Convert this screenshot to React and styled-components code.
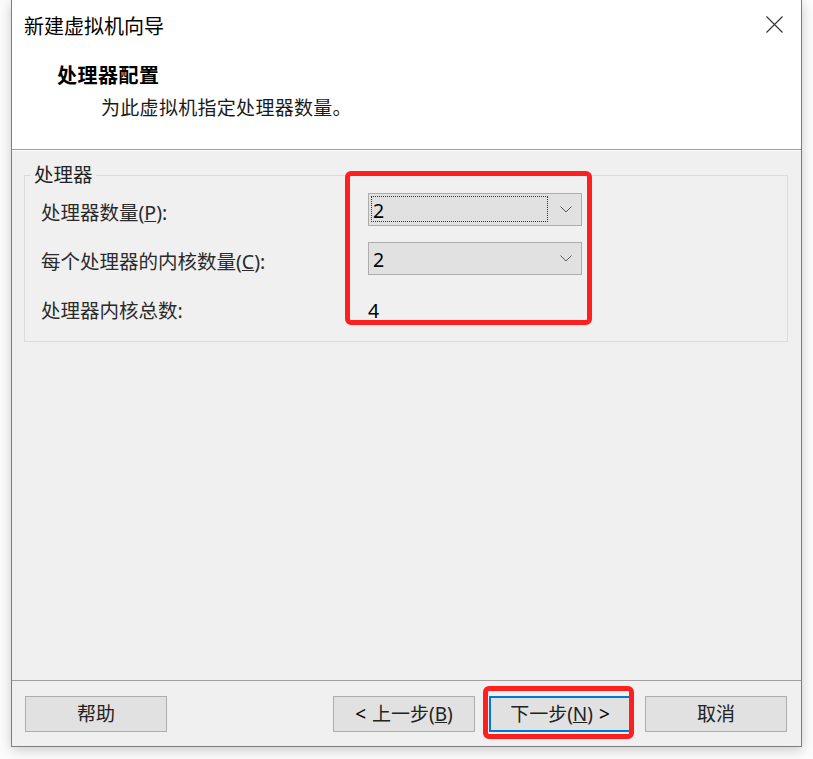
import React from "react";
import styled, { createGlobalStyle } from "styled-components";

const Global = createGlobalStyle`
  html, body { margin: 0; padding: 0; background: #ffffff; }
  body {
    font-family: "Noto Sans", "Noto Sans CJK SC", sans-serif;
    overflow: hidden;
  }
  * { box-sizing: border-box; }
`;

const Page = styled.div`
  width: 813px;
  height: 759px;
  padding-left: 11px;
  background: #fcfcfc;
`;

const Window = styled.div`
  width: 791px;
  height: 747px;
  display: flex;
  flex-direction: column;
  background: #f0f0f0;
  border: 1px solid #7d7d7d;
  border-top: none;
  box-shadow: 0 3px 12px rgba(0, 0, 0, 0.2);
`;

const Header = styled.header`
  height: 150px;
  background: #ffffff;
  border-bottom: 1px solid #a0a0a0;
`;

const TitleBar = styled.div`
  height: 50px;
  padding: 3px 18px 0 12px;
  display: flex;
  align-items: center;
  justify-content: space-between;
`;

const Title = styled.div`
  font-size: 20px;
  line-height: 24px;
  color: #000;
`;

const CloseIcon = styled.svg`
  width: 17px;
  height: 17px;
  margin-top: -4px;
`;

const Heading = styled.div`
  margin: 14px 0 0 45px;
  font-size: 20px;
  letter-spacing: 0.5px;
  line-height: 24px;
  font-weight: 700;
  color: #000;
`;

const Subtitle = styled.div`
  margin: 8px 0 0 89px;
  font-size: 19px;
  letter-spacing: 0.3px;
  line-height: 24px;
  color: #1a1a1a;
`;

const Body = styled.main`
  flex: 1;
  border-top: 1px solid #ffffff;
  padding: 12px 13px 0 12px;
`;

const Group = styled.fieldset`
  margin: 0;
  min-width: 0;
  border: 1px solid #dcdcdc;
  padding: 6px 16px 17px 16px;
  display: flex;
`;

const Legend = styled.legend`
  padding: 0 3px;
  margin-left: -10px;
  font-size: 19.5px;
  line-height: 24px;
  color: #222;
`;

const Column = styled.div`
  display: flex;
  flex-direction: column;
  gap: 16px;
  width: ${(p) => p.$width}px;
  position: ${(p) => (p.$annotated ? "relative" : "static")};
`;

const Label = styled.div`
  height: 33px;
  line-height: 33px;
  padding-top: 3px;
  font-size: 19.5px;
  color: #2a2a2a;
  white-space: nowrap;
`;

const Combo = styled.div`
  height: 33px;
  background: #e1e1e1;
  border: 1px solid #adadad;
  display: flex;
  align-items: center;
  padding: 2px 9px 3px 2px;
  gap: 12px;
`;

const ComboValue = styled.div`
  flex: 1;
  height: 100%;
  display: flex;
  align-items: center;
  padding: 2px 0 0 1px;
  font-size: 19.5px;
  color: #000;
  border: 1px dotted ${(p) => (p.$focused ? "#333" : "transparent")};
`;

const Chevron = styled.svg`
  width: 12px;
  height: 7px;
  flex: none;
`;

const Total = styled.div`
  height: 33px;
  line-height: 33px;
  padding-top: 3px;
  font-size: 19.5px;
  color: #000;
`;

const Annotation = styled.div`
  position: absolute;
  left: ${(p) => p.$left}px;
  top: ${(p) => p.$top}px;
  width: ${(p) => p.$w}px;
  height: ${(p) => p.$h}px;
  border: 5px solid #ff1f1f;
  border-radius: 6px;
  pointer-events: none;
`;

const Footer = styled.footer`
  height: 66px;
  border-top: 1px solid #a0a0a0;
  padding: 15px 14px 0 13px;
  display: flex;
  gap: 14px;
`;

const Spacer = styled.div`
  flex: 1;
`;

const Slot = styled.div`
  position: relative;
`;

const Button = styled.button`
  width: 142px;
  height: 36px;
  margin: 0;
  padding: 1px 0 0;
  background: #e1e1e1;
  border: ${(p) => (p.$default ? "2px solid #0078d7" : "1px solid #adadad")};
  font-family: inherit;
  font-size: 19px;
  color: #222;
  display: flex;
  align-items: center;
  justify-content: center;
  gap: 6px;
  line-height: 1;
`;

const Arrow = styled.span`
  color: #000;
`;

function ChevronDown() {
  return (
    <Chevron viewBox="0 0 12 7">
      <polyline points="0.5,0.5 6,6 11.5,0.5" fill="none" stroke="#5a5a5a" strokeWidth="1" />
    </Chevron>
  );
}

export default function App() {
  return (
    <>
      <Global />
      <Page>
        <Window>
          <Header>
            <TitleBar>
              <Title>新建虚拟机向导</Title>
              <CloseIcon viewBox="0 0 17 17">
                <path d="M0.5 0.5 L16.5 16.5 M16.5 0.5 L0.5 16.5" stroke="#333" strokeWidth="1.1" />
              </CloseIcon>
            </TitleBar>
            <Heading>处理器配置</Heading>
            <Subtitle>为此虚拟机指定处理器数量。</Subtitle>
          </Header>
          <Body>
            <Group>
              <Legend>处理器</Legend>
              <Column $width={327}>
                <Label>处理器数量(<u>P</u>):</Label>
                <Label>每个处理器的内核数量(<u>C</u>):</Label>
                <Label>处理器内核总数:</Label>
              </Column>
              <Column $width={214} $annotated>
                <Combo>
                  <ComboValue $focused>2</ComboValue>
                  <ChevronDown />
                </Combo>
                <Combo>
                  <ComboValue>2</ComboValue>
                  <ChevronDown />
                </Combo>
                <Total>4</Total>
                <Annotation $left={-23} $top={-22} $w={247} $h={154} />
              </Column>
            </Group>
          </Body>
          <Footer>
            <Button>帮助</Button>
            <Spacer />
            <Button>
              <Arrow>&lt;</Arrow>
              <span>上一步(<u>B</u>)</span>
            </Button>
            <Slot>
              <Button $default>
                <span>下一步(<u>N</u>)</span>
                <Arrow>&gt;</Arrow>
              </Button>
              <Annotation $left={-6} $top={-10} $w={151} $h={53} />
            </Slot>
            <Button>取消</Button>
          </Footer>
        </Window>
      </Page>
    </>
  );
}
